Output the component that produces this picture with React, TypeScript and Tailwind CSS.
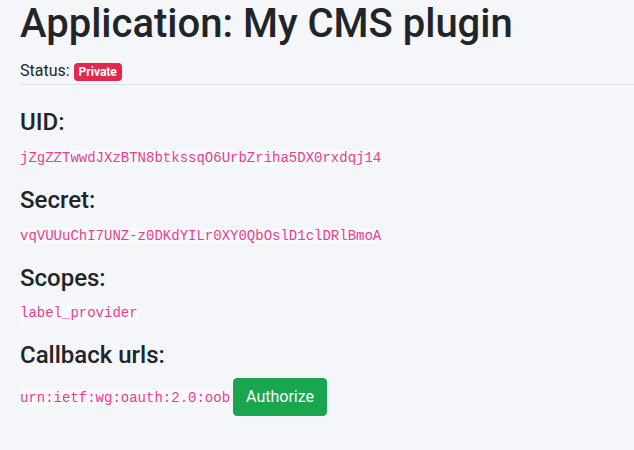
import React from 'react';

const sections: { label: string; value: string }[] = [
    { label: 'UID:', value: 'jZgZZTwwdJXzBTN8btkssqO6UrbZriha5DX0rxdqj14' },
    { label: 'Secret:', value: 'vqVUUuChI7UNZ-z0DKdYILr0XY0QbOslD1clDRlBmoA' },
    { label: 'Scopes:', value: 'label_provider' },
];

function Code({ children }: { children: React.ReactNode }) {
    return (
        <code className="font-['Liberation_Mono',monospace] text-[14px] text-[#e83e8c] bg-[#fafafc]">
            {children}
        </code>
    );
}

export default function App() {
    return (
        <div className="min-h-screen bg-[#f5f6fa] pl-5 font-['Roboto',sans-serif] text-[#212529] text-base">
            {/* Header */}
            <h1 className="text-[40px] font-medium leading-[1.2] mb-[11px]">Application: My CMS plugin</h1>
            <div className="leading-6">
                Status:{' '}
                <span className="inline-block bg-[#e0294b] text-white text-[12px] font-bold leading-none px-[5px] py-[3px] rounded">
                    Private
                </span>
            </div>
            <div className="border-t border-[#dee2e6] mt-px" />

            {/* Details */}
            <div className="mt-[23px]">
                {sections.map((s) => (
                    <div key={s.label}>
                        <h3 className="text-[24px] font-medium leading-[1.2] mb-2">{s.label}</h3>
                        <p className="leading-6 mb-4">
                            <Code>{s.value}</Code>
                        </p>
                    </div>
                ))}
                <h3 className="text-[24px] font-medium leading-[1.2] mb-2">Callback urls:</h3>
                <p className="leading-6 mb-4">
                    <Code>urn:ietf:wg:oauth:2.0:oob</Code>
                    <button className="inline-block align-baseline ml-[3px] bg-[#1aa64f] text-white text-base leading-6 px-3 py-1.5 border border-[#1aa64f] rounded">
                        Authorize
                    </button>
                </p>
            </div>
        </div>
    );
}
